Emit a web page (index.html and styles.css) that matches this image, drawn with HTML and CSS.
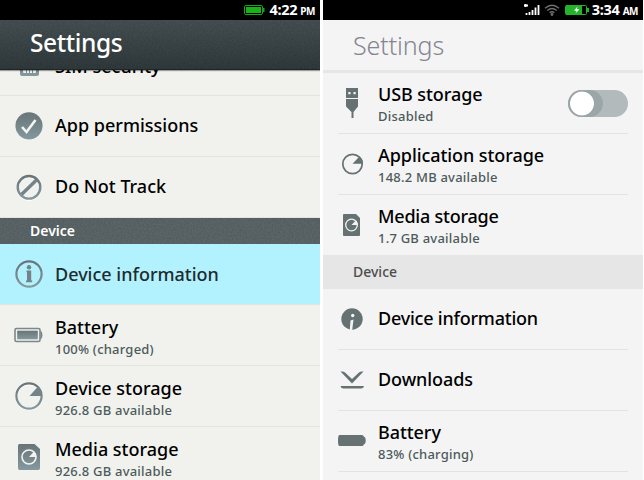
FILE: index.html
```html
<!DOCTYPE html>
<html lang="en">
<head>
<meta charset="utf-8">
<title>Settings</title>
<link rel="stylesheet" href="styles.css">
</head>
<body>
<svg class="defs" width="0" height="0">
  <defs>
    <linearGradient id="steel" x1="0" y1="0" x2="0" y2="1"><stop offset="0" stop-color="#687478"/><stop offset="1" stop-color="#84999e"/></linearGradient>
    <filter id="grain" x="0" y="0" width="100%" height="100%"><feTurbulence type="fractalNoise" baseFrequency=".65" numOctaves="2" seed="4"/><feColorMatrix values="0 0 0 0 0  0 0 0 0 0  0 0 0 0 0  1.4 0 0 0 -.45"/></filter>
  </defs>
</svg>
<main class="screens">
  <section class="phone old">
    <div class="status">
      <svg width="22" height="12" viewBox="0 0 22 12"><rect x=".5" y="1.500" width="18" height="9" rx="1.500" fill="#000" stroke="#16a716"/><rect x="2" y="3" width="15" height="6" fill="#17b317"/><path d="M19 4h1.500v4H19z" fill="#16a716"/></svg>
      <span class="clock">4:22</span><span class="ampm">PM</span>
    </div>
    <header class="bar"><svg class="grain" width="320" height="50"><rect width="320" height="50" filter="url(#grain)"/></svg><h1>Settings</h1></header>
    <div class="list">
      <div class="row clipped">
        <div class="icon"><svg width="30" height="30" viewBox="0 0 30 30"><path d="M6 3h19v21q0 2-2 2H8q-2 0-2-2z" fill="url(#steel)"/><rect x="9" y="14" width="13" height="9" rx="1" fill="#edf0ec"/><path d="M9 17.500h13M12.500 18v5M15.500 18v5M18.500 18v5" stroke="#7b8d91"/></svg></div>
        <div class="text"><div class="name">SIM security</div></div>
      </div>
      <div class="row">
        <div class="icon"><svg width="30" height="30" viewBox="0 0 30 30"><circle cx="15" cy="15.500" r="13.500" fill="#fff"/><circle cx="15" cy="14.800" r="13.600" fill="url(#steel)"/><path d="M8 16l4.500 5L21.500 9" fill="none" stroke="#f3f4f1" stroke-width="2.600"/></svg></div>
        <div class="text"><div class="name">App permissions</div></div>
      </div>
      <div class="row">
        <div class="icon"><svg width="30" height="30" viewBox="0 0 30 30"><circle cx="15" cy="16.300" r="11.500" fill="none" stroke="#fff" stroke-width="2"/><circle cx="15" cy="15.300" r="11.300" fill="none" stroke="url(#steel)" stroke-width="2.400"/><path d="M7.500 22.500L22.500 8" stroke="#748388" stroke-width="3.400"/></svg></div>
        <div class="text"><div class="name">Do Not Track</div></div>
      </div>
      <h2 class="section"><svg class="grain" width="320" height="26"><rect width="320" height="26" filter="url(#grain)"/></svg><span>Device</span></h2>
      <div class="row active">
        <div class="icon"><svg width="30" height="30" viewBox="0 0 30 30"><circle cx="15" cy="15" r="12.600" fill="none" stroke="url(#steel)" stroke-width="2.200"/><circle cx="15" cy="8.200" r="2.200" fill="#748388"/><path d="M12.500 11.500h4.700v10h1v1.700h-6.200v-1.700h1v-8.300h-.5z" fill="#748388"/></svg></div>
        <div class="text"><div class="name">Device information</div></div>
      </div>
      <div class="row">
        <div class="icon"><svg width="30" height="30" viewBox="0 0 30 30"><rect x="1" y="8.500" width="25" height="13" rx="1.500" fill="none" stroke="#7b878a" stroke-width="1.600"/><rect x="3.200" y="10.700" width="20.600" height="8.600" fill="url(#steel)"/><path d="M26.500 10.500q2 1 2 4.500t-2 4.500z" fill="#7b878a"/></svg></div>
        <div class="text double"><div class="name">Battery</div><div class="note">100% (charged)</div></div>
      </div>
      <div class="row">
        <div class="icon"><svg width="30" height="30" viewBox="0 0 30 30"><circle cx="15" cy="16" r="12.600" fill="none" stroke="#fff" stroke-width="2"/><circle cx="15" cy="15" r="12.600" fill="none" stroke="url(#steel)" stroke-width="2.200"/><path d="M15.500 15L24 5.500q4 4 4 9.500z" fill="#748388"/></svg></div>
        <div class="text double"><div class="name">Device storage</div><div class="note">926.8 GB available</div></div>
      </div>
      <div class="row">
        <div class="icon"><svg width="30" height="30" viewBox="0 0 30 30"><path d="M4 4q0-2 1.500-2H20.500L26 7v19q0 2-1.500 2H5.500Q4 28 4 26z" fill="url(#steel)"/><circle cx="15" cy="15" r="7" fill="none" stroke="#f3f4f1" stroke-width="1.600"/><path d="M15 15L20 9.500q2.500 2.500 2.300 5.500z" fill="#f3f4f1"/></svg></div>
        <div class="text double"><div class="name">Media storage</div><div class="note">926.8 GB available</div></div>
      </div>
    </div>
  </section>
  <section class="phone new">
    <div class="status">
      <svg width="16" height="12" viewBox="0 0 16 12"><path d="M1.500 0v3M0 1.500h4M2.500 9v2M5.500 8v3M8.500 6v5M11.500 3.500v7.500M14.500 1v10" stroke="#fff" stroke-width="1.800"/></svg>
      <svg class="wifi" width="16" height="12" viewBox="0 0 16 12" fill="none" stroke="#6f6f6f" stroke-width="1.400"><path d="M1 4.200q7-6 14 0M3.300 6.500q4.700-4 9.400 0M5.600 8.700q2.400-2 4.800 0"/><circle cx="8" cy="10.500" r=".7" fill="#777"/></svg>
      <svg class="charge" width="24" height="12" viewBox="0 0 24 12"><rect x=".5" y="1.500" width="21" height="9" rx="1" stroke="#2bb32f" fill="#000"/><path d="M1 1h16v10H1z" fill="#25b32a"/><path d="M22 4h2v4h-2z" fill="#25b32a"/><path d="M12.500 2.500L9 6.700h2.700L10.500 9.500l4-4.200h-2.700z" fill="#fff"/></svg>
      <span class="clock">3:34</span><span class="ampm">AM</span>
    </div>
    <header class="bar"><h1>Settings</h1></header>
    <div class="list">
      <div class="row">
        <div class="icon"><svg width="30" height="32" viewBox="0 0 30 32" fill="#667172"><path d="M8 1h12v10H8zM8 12h12v7.500L15.500 25v6h-2v-6L8 19.500z"/><path d="M10.300 5h2.200v2.200h-2.200zM15.500 5h2.200v2.200h-2.200z" fill="#f4f4f4"/></svg></div>
        <div class="text double"><div class="name">USB storage</div><div class="note">Disabled</div></div>
        <div class="toggle"><i></i></div>
      </div>
      <div class="row">
        <div class="icon"><svg width="30" height="30" viewBox="0 0 30 30"><circle cx="14.500" cy="15" r="9.700" fill="none" stroke="#667172" stroke-width="1.700"/><path d="M14.500 14.800L21.500 7.500q3.800 3 3.500 7.300z" fill="#667172"/></svg></div>
        <div class="text double"><div class="name">Application storage</div><div class="note">148.2 MB available</div></div>
      </div>
      <div class="row last">
        <div class="icon"><svg width="30" height="30" viewBox="0 0 30 30"><path d="M5 5q0-1 1-1H18l4 4v17q0 1-1 1H6q-1 0-1-1z" fill="#667172"/><circle cx="13.500" cy="15" r="5.800" fill="none" stroke="#f4f4f4" stroke-width="1.300"/><path d="M13.500 15l4.500-4.700q1.700 2 1.700 4.700z" fill="#f4f4f4"/></svg></div>
        <div class="text double"><div class="name tight">Media storage</div><div class="note">1.7 GB available</div></div>
      </div>
      <h2 class="section"><span>Device</span></h2>
      <div class="row">
        <div class="icon"><svg width="30" height="30" viewBox="0 0 30 30"><circle cx="14" cy="15" r="10.700" fill="#667172"/><circle cx="14.700" cy="11.500" r="1.700" fill="#f4f4f4"/><path d="M12.500 16.500l3-1-1.300 10.500h-2.400z" fill="#f4f4f4"/></svg></div>
        <div class="text"><div class="name tight">Device information</div></div>
      </div>
      <div class="row">
        <div class="icon"><svg width="30" height="30" viewBox="0 0 30 30"><path d="M2.500 6.500q3-.5 4.500 1l7 6.500 7-6.500q1.500-1.500 4.500-1L14 18.500zM2.500 21h23.500q-.5 2.500-3 2.500H5.500q-2.500 0-3-2.500z" fill="#667172"/></svg></div>
        <div class="text"><div class="name">Downloads</div></div>
      </div>
      <div class="row">
        <div class="icon"><svg width="30" height="30" viewBox="0 0 30 30"><path d="M1.500 9H24q1.500 0 1.700 1.500 2 .5 2 4t-2 4Q25.500 20 24 20H1.500Q0 20 0 14.500T1.500 9z" fill="#667172"/></svg></div>
        <div class="text double"><div class="name">Battery</div><div class="note">83% (charging)</div></div>
      </div>
    </div>
  </section>
</main>
</body>
</html>
```
FILE: styles.css
```css
* { box-sizing: border-box; }
body { margin: 0; background: #fff; font-family: "Noto Sans", "Open Sans", sans-serif; overflow: hidden; }
.defs { position: absolute; }
.screens { display: flex; gap: 3px; width: 644px; height: 480px; overflow: hidden; }
.phone { width: 320px; height: 480px; display: flex; flex-direction: column; overflow: hidden; flex: none; }
h1, h2 { margin: 0; }
svg { display: block; flex: none; }
.status { height: 20px; flex: none; background: #000; color: #fff; display: flex; align-items: center; justify-content: flex-end; padding-right: 5px; font-weight: 700; }
.clock { font-size: 14.5px; line-height: 20px; margin: -2px 0 0 3px; letter-spacing: -.25px; }
.ampm { font-size: 10px; line-height: 20px; margin: 2px 0 0 3px; letter-spacing: -.5px; }
.wifi { margin-left: 4px; }
.charge { margin-left: 5px; }
.bar { height: 50px; flex: none; display: flex; align-items: center; padding-left: 30px; position: relative; }
.bar h1 { font-size: 24.5px; line-height: 46px; margin-top: -4px; font-weight: 500; letter-spacing: -.4px; white-space: nowrap; position: relative; }
.grain { position: absolute; left: 0; top: 0; opacity: .18; }
.list { flex: 1; min-height: 0; overflow: hidden; }
.row { height: 61px; display: flex; align-items: center; position: relative; }
.icon { width: 30px; flex: none; display: flex; justify-content: center; }
.text { flex: 1; white-space: nowrap; }
.name { font-size: 18px; line-height: 23px; font-weight: 500; color: #000; }
.name:only-child { margin-top: -2px; }
.note { font-size: 13px; line-height: 20px; letter-spacing: .22px; font-weight: 500; color: #4d5a5b; }

.old { background: #f1f2ee; }
.old .bar { background: linear-gradient(#465154, #30393b); border-bottom: 1px solid #202728; color: #fff; z-index: 1; box-shadow: 0 1px 1px rgba(0, 0, 0, .35); }
.old .row { padding-left: 14px; border-bottom: 1px solid #e2e4df; }
.old .text { padding-left: 11px; }
.old .double { padding-top: 4px; }
.old .clipped { margin-top: -35px; }
.old .clipped .name { margin-top: 2px; }
.old .section { height: 26px; background: #5c6668; color: #fff; font-size: 14px; line-height: 26px; font-weight: 600; padding-left: 30px; position: relative; }
.section span { position: relative; }
.old .active { background: #b2f2ff; }
.old .active .name { color: #202b2d; margin-top: 0; }

.new { background: #f4f4f4; }
.new .bar { height: 53px; border-bottom: 3px solid #e6e6e6; color: #858590; }
.new .bar h1 { font-size: 25px; font-weight: 300; margin-top: 0; letter-spacing: -.1px; }
.new .row { margin: 0 15px; border-bottom: 1px solid #e3e3e3; }
.new .row.last { height: 60px; border-bottom: 0; }
.new .text { padding-left: 10px; }
.new .double { padding-top: 2px; }
.new .name { letter-spacing: -.07px; }
.new .name.tight { letter-spacing: -.22px; }
.new .section { height: 34px; background: #e6e6e6; color: #4d4d4d; font-size: 14px; line-height: 34px; font-weight: 500; padding-left: 30px; }
.toggle { width: 60px; height: 27px; border-radius: 14px; background: #b2babc; overflow: hidden; flex: none; }
.toggle i { display: block; width: 35px; height: 27px; background: radial-gradient(circle at 14px 13.5px, #fff 11.5px, #9ba6a8 12.3px); border-radius: 0 14px 14px 0; }
```
